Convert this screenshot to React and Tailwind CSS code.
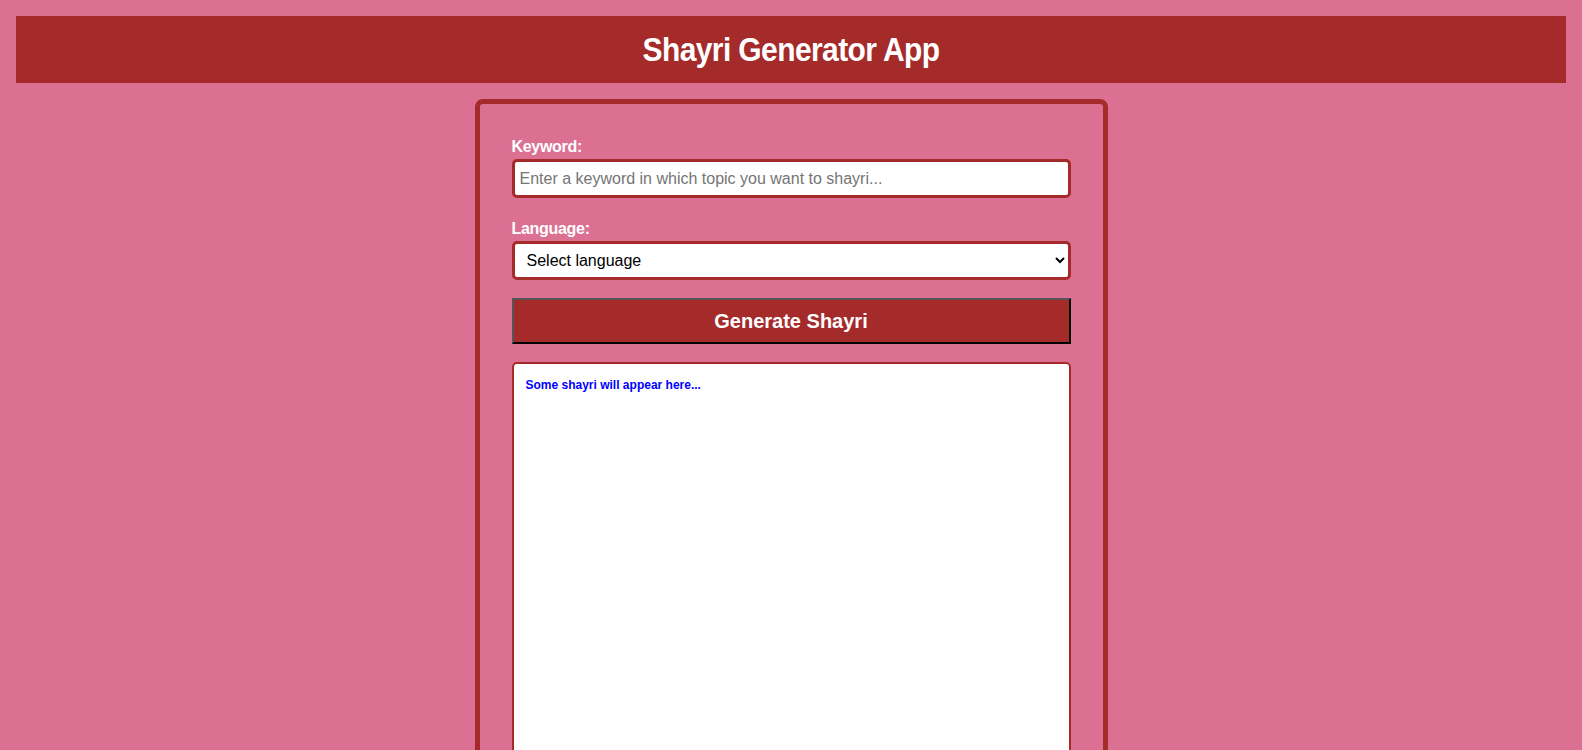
import {useState} from 'react';

const headFont = {fontFamily: '"Liberation Sans", Arial, sans-serif'};

function App(){
  const [keyword, setKeyword] = useState('');
  const [language, setLanguage] = useState('');

  return (
    <div className="min-h-screen bg-[#db7093] py-4" style={headFont}>
      <header className="mx-4 h-[67px] bg-[#a52a2a] flex items-center justify-center">
        <h1 className="text-[30px] font-bold text-white tracking-[-0.6px] scale-y-[1.08]">Shayri Generator App</h1>
      </header>

      <div className="w-[633px] mx-auto mt-4 border-[5px] border-[#a52a2a] rounded-[8px] p-8">
        <label className="block text-white font-bold text-[16px] leading-[21px] mb-[2px] tracking-[-0.3px]">Keyword:</label>
        <input
          type="text"
          value={keyword}
          onChange={(e) => setKeyword(e.target.value)}
          placeholder="Enter a keyword in which topic you want to shayri..."
          className="w-full h-[39px] bg-white border-[3px] border-[#a52a2a] rounded-[5px] px-[5px] text-[16px] text-black placeholder:text-[#757575] outline-none"
        />

        <label className="block text-white font-bold text-[16px] leading-[21px] mt-5 mb-[2px] tracking-[-0.3px]">Language:</label>
        <select
          value={language}
          onChange={(e) => setLanguage(e.target.value)}
          className="w-full h-[39px] bg-white border-[3px] border-[#a52a2a] rounded-[5px] pl-2 pr-1 text-[16px] text-black outline-none"
        >
          <option value="">Select language</option>
          <option value="hindi">Hindi</option>
          <option value="english">English</option>
          <option value="urdu">Urdu</option>
        </select>

        <button
          type="button"
          className="w-full h-[46px] mt-[18px] bg-[#a52a2a] text-white font-bold text-[20px] border-2 border-t-[#555] border-l-[#555] border-b-black border-r-black"
        >
          Generate Shayri
        </button>

        <div className="mt-[18px] h-[430px] bg-white border-2 border-[#a52a2a] rounded-[5px] p-3">
          <p className="text-[12px] font-bold text-[#0000ff]">Some shayri will appear here...</p>
        </div>
      </div>
    </div>
  );
}

export default App;
